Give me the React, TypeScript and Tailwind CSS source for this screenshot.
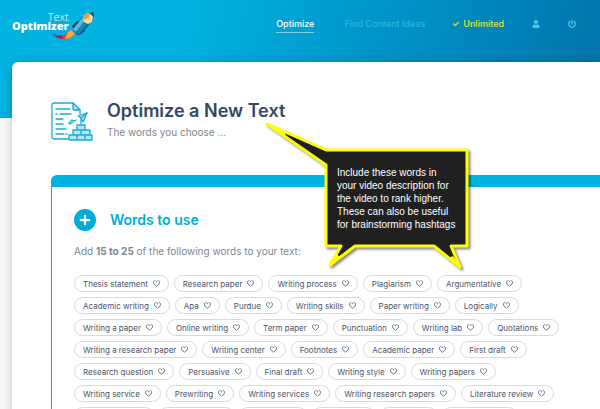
import { FaCheck, FaPlus, FaPowerOff, FaRegHeart, FaUser } from 'react-icons/fa';

const wordRows = [
  ['Thesis statement', 'Research paper', 'Writing process', 'Plagiarism', 'Argumentative'],
  ['Academic writing', 'Apa', 'Purdue', 'Writing skills', 'Paper writing', 'Logically'],
  ['Writing a paper', 'Online writing', 'Term paper', 'Punctuation', 'Writing lab', 'Quotations'],
  ['Writing a research paper', 'Writing center', 'Footnotes', 'Academic paper', 'First draft'],
  ['Research question', 'Persuasive', 'Final draft', 'Writing style', 'Writing papers'],
  ['Writing service', 'Prewriting', 'Writing services', 'Writing research papers', 'Literature review'],
  ['Essay writing', 'Dissertation', 'Proofread', 'Citations', 'Essays', 'Introduction'],
];

const Logo = () => (
  <a href="#" aria-label="Text Optimizer" className="flex items-start text-white">
    <span className="flex flex-col items-end font-['Open_Sans',sans-serif]">
      <span className="text-[11px] leading-[9px] font-light">Text</span>
      <span className="text-[11px] leading-[10px] font-extrabold">Optimizer</span>
    </span>
    <svg viewBox="0 0 44 28" className="-ml-[18px] h-7 w-11" aria-hidden="true">
      <path d="M1 21c4 3 9 4 14 1l4-4 5 4c-4 5-9 6-13 5-5-1-8-3-10-6z" fill="#e5472d" />
      <path d="M1 21c4 3 7 3 10 2l1 4c-5 0-9-3-11-6z" fill="#9b2377" />
      <path d="m17 20 3-2 4 4-5 4-5 1z" fill="#ffa63d" />
      <path d="m21 14 4-4 3-1-3 7-2 1z" fill="#173650" />
      <path d="m27 20 6-3 1 2-4 3-3 1z" fill="#173650" />
      <path d="M22 17 32 4l10-3 1 2-1 5-10 12-6 3z" fill="#075e8b" />
      <path d="m22 17 10-12 3 3-10 12z" fill="#55bddb" />
      <path d="m25 20 9-12 4 3-10 11z" fill="#1686b2" />
      <path d="M32 4 36 1l4 1 2 3-1 5-4 2-4-2z" fill="#ffe19c" />
      <path d="m32 4 4-3 3 1-1 3-5 3z" fill="#f79735" />
      <path d="m38 1 5-1-1 4z" fill="#174e76" />
    </svg>
  </a>
);

const Header = () => (
  <header className="h-[118px] bg-[linear-gradient(105deg,#00b3e0_30%,#0094c8_62%,#0073aa_100%)]">
    <div className="flex items-start justify-between pt-3 pr-6 pl-3">
      <Logo />
      <nav className="flex items-start pt-1 text-[9px] leading-4 font-medium text-[#52c5e5]">
        <a href="#" className="mr-[30px] border-b border-[#79d4ec] text-white">Optimize</a>
        <a href="#" className="mr-7 font-medium text-[#2bb9e0]">Find Content Ideas</a>
        <a href="#" className="mr-7 flex items-center gap-1 text-[#e3e52c]">
          <FaCheck className="size-1.5" />
          Unlimited
        </a>
        <button type="button" aria-label="Account" className="mr-7 flex h-4 items-center">
          <FaUser className="size-2" />
        </button>
        <button type="button" aria-label="Log out" className="flex h-4 items-center">
          <FaPowerOff className="size-2" />
        </button>
      </nav>
    </div>
  </header>
);

const DocumentIcon = () => (
  <svg
    viewBox="0 0 42 40"
    className="h-10 w-[42px] shrink-0"
    fill="none"
    stroke="#16acd5"
    strokeWidth="1.3"
    strokeLinejoin="round"
    strokeLinecap="round"
    aria-hidden="true"
  >
    <path d="M17 37H3a2 2 0 0 1-2-2V3a2 2 0 0 1 2-2h19l7 7v4" />
    <path d="M22 1v6q0 1 1 1h6z" fill="#b5e5f3" />
    <path d="M5 7h14M5 12h1M9 12h11M5 17h7M5 22h7M5 27h10M5 32h8M15 32h1" />
    <path d="M30 22V17M27 14l9-3-4 9-2-4z" fill="#b5e5f3" />
    <path d="m30 16 6-5M18 21l3-3 2 1 2-1M18 21l1 1 3-2" />
    <path d="M26 23h8v5h-8zM22 28h8v5h-8zM30 28h9v5h-9zM18 33h8v5h-8zM26 33h8v5h-8zM34 33h7v5h-7z" fill="#b5e5f3" />
  </svg>
);

const WordChip = ({ word }: { word: string }) => (
  <button
    type="button"
    className="flex h-[17px] items-center gap-[5px] rounded-full border border-[#d5dadd] px-2 text-[8px] whitespace-nowrap text-[#4a5568]"
  >
    {word}
    <FaRegHeart className="size-[7px]" />
  </button>
);

const Callout = () => (
  <aside className="absolute top-[120px] left-[264px] h-[152px] w-[208px]">
    <svg viewBox="0 0 208 152" className="absolute inset-0 drop-shadow-[2px_2px_1px_rgba(0,0,0,0.45)]" aria-hidden="true">
      <path
        d="M3 4 62 30H203V126H187L196 147 170 126H91L66 145 77 126H62V45z"
        fill="#202021"
        stroke="#ff0"
        strokeWidth="3"
        strokeLinejoin="round"
      />
      <path d="M3 4 20 11 23 18zM196 147l-7-11-4 2zM66 145l7-11 3 3z" fill="#ff0" />
    </svg>
    <p className="relative pt-[46px] pl-[73px] font-['Liberation_Sans',sans-serif] text-[10px] leading-[13px] whitespace-nowrap text-white">
      Include these words in
      <br />
      your video description for
      <br />
      the video to rank higher.
      <br />
      These can also be useful
      <br />
      for brainstorming hashtags
    </p>
  </aside>
);

export default function App() {
  return (
    <div className="relative max-h-screen overflow-hidden bg-[#f8f8f8] font-['Inter',sans-serif]">
      <Header />
      <main className="relative -mt-14 ml-3 rounded-tl-md bg-white pt-10 pl-[39px] shadow-[0_0_10px_rgba(0,0,0,0.2)]">
        <div className="flex items-start gap-[14px]">
          <DocumentIcon />
          <div>
            <h1 className="text-lg leading-[18px] font-semibold text-[#34495e]">Optimize a New Text</h1>
            <p className="mt-1 text-[10px] leading-4 text-[#7c8591]">The words you choose ...</p>
          </div>
        </div>

        <section className="mt-[33px] rounded-tl-md border-t-12 border-l border-[#00b2df] pt-[22px] pb-4 pl-[22px]">
          <div className="flex items-center gap-[14px] text-[#00acd9]">
            <span className="flex size-[22px] items-center justify-center rounded-full bg-[#00acd9] text-white">
              <FaPlus className="size-3" />
            </span>
            <h2 className="text-sm leading-[22px] font-semibold">Words to use</h2>
          </div>
          <p className="mt-3 text-[10px] leading-4 text-[#808691]">
            Add <strong className="font-bold">15 to 25</strong> of the following words to your text:
          </p>
          <div className="mt-4 flex flex-col gap-[5px]">
            {wordRows.map((row) => (
              <div key={row[0]} className="flex gap-[5px]">
                {row.map((word) => (
                  <WordChip key={word} word={word} />
                ))}
              </div>
            ))}
          </div>
        </section>
      </main>
      <Callout />
    </div>
  );
}
